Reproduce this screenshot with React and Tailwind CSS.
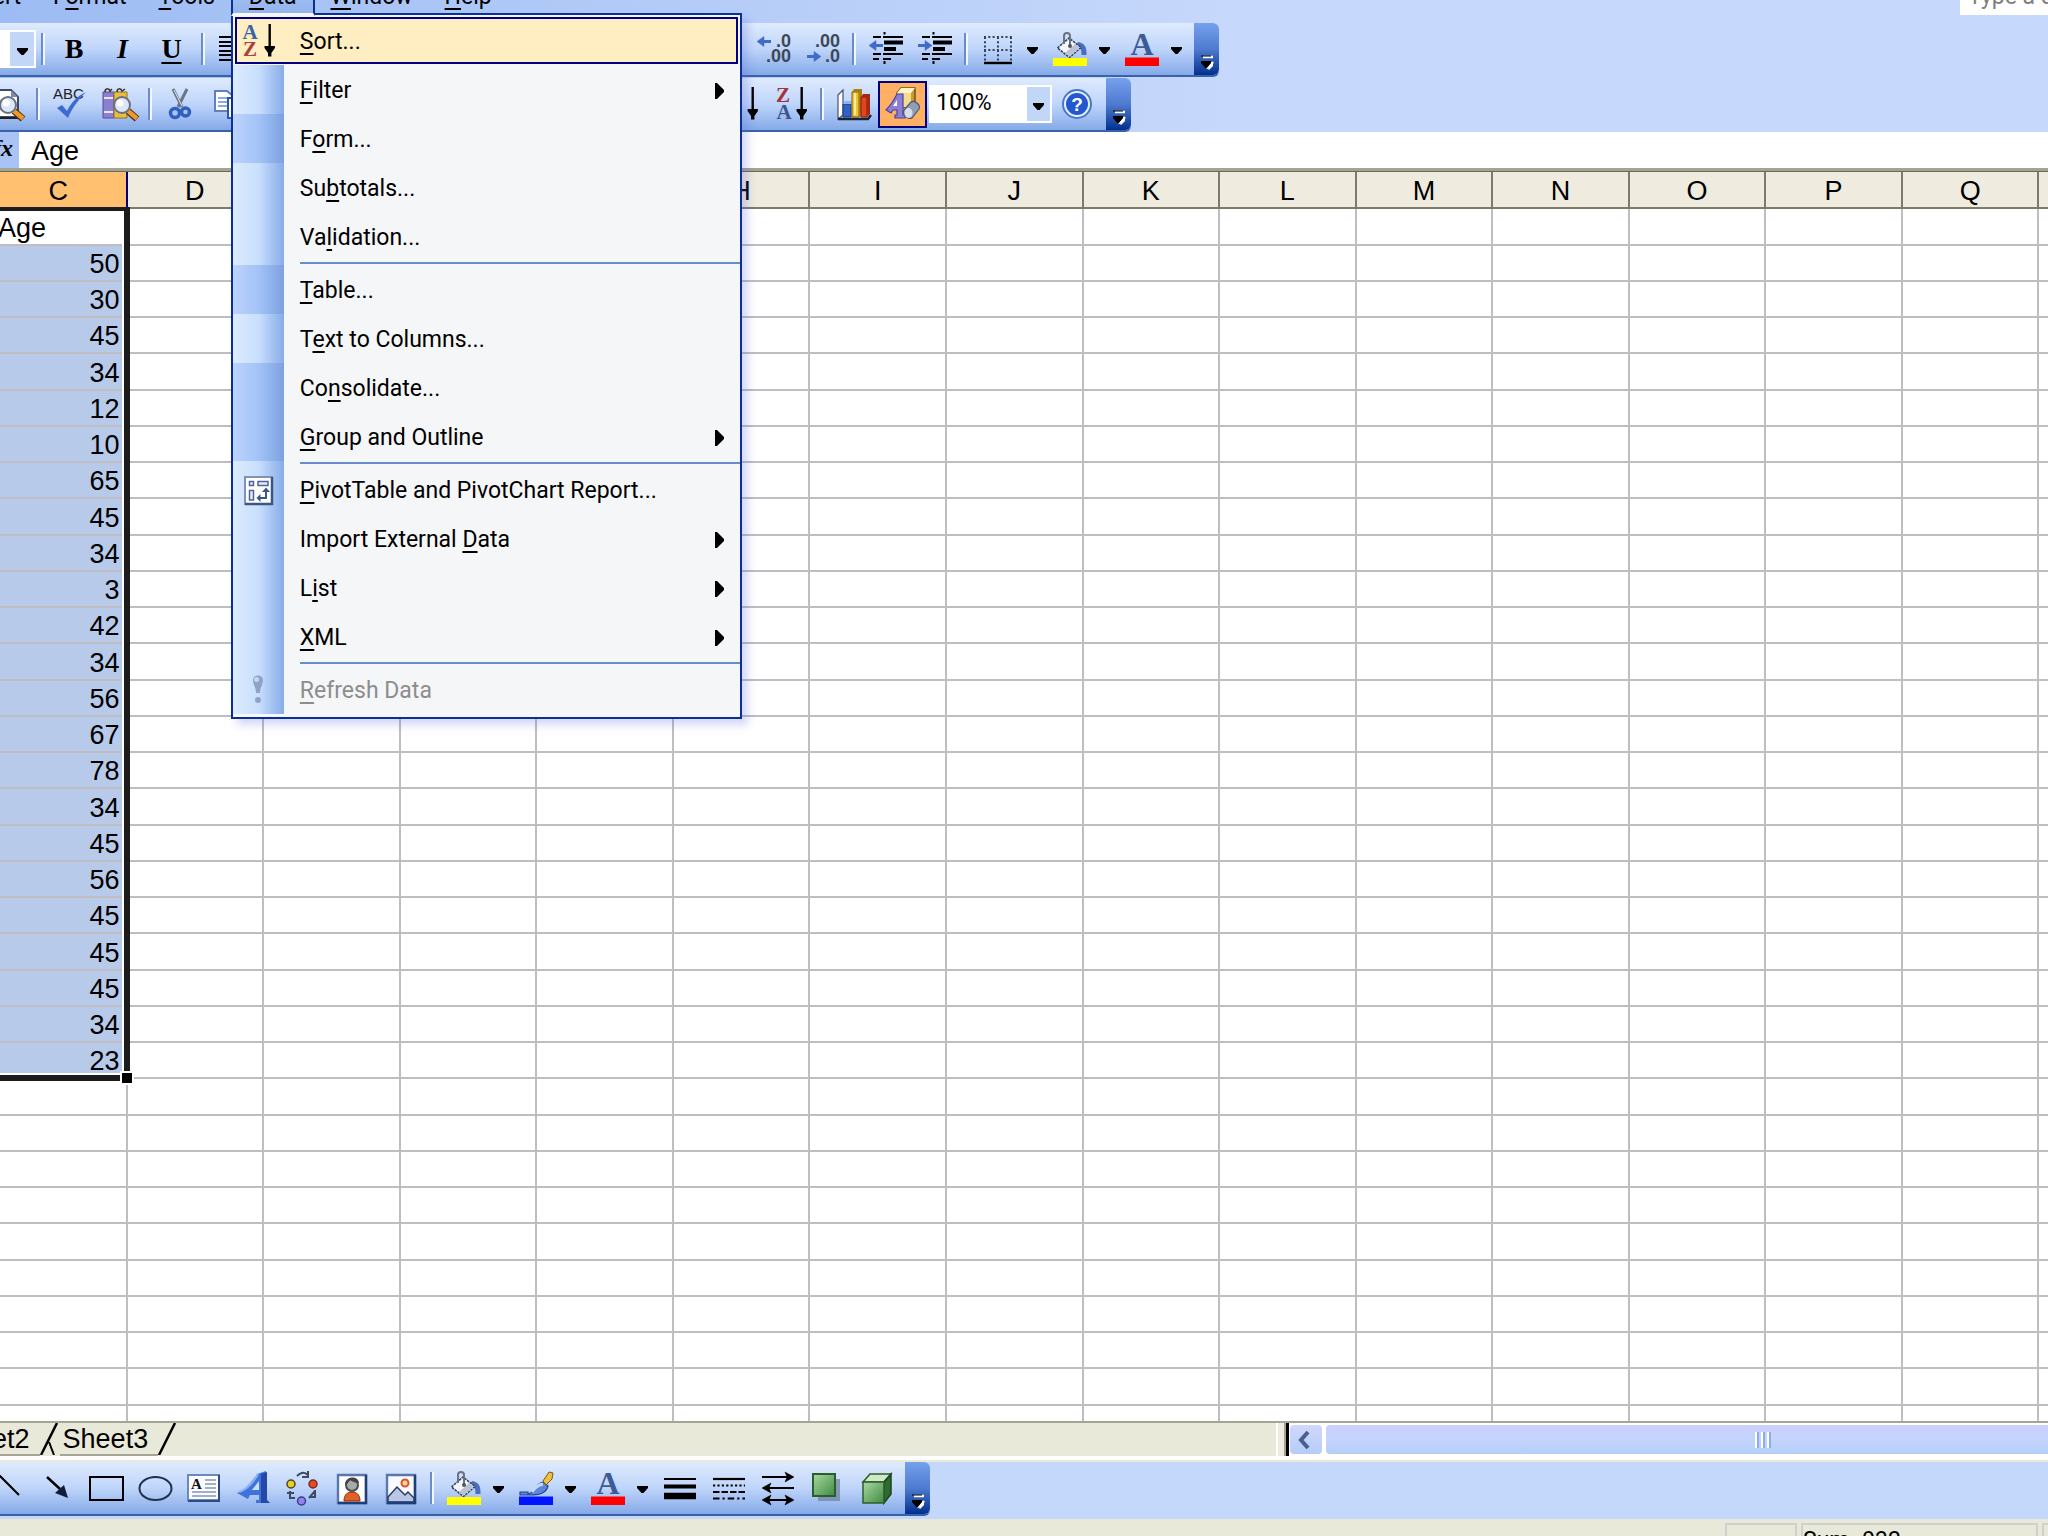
import { useState } from 'react';

const ages = [50, 30, 45, 34, 12, 10, 65, 45, 34, 3, 42, 34, 56, 67, 78, 34, 45, 56, 45, 45, 45, 34, 23];
const columns = ['C', 'D', 'E', 'F', 'G', 'H', 'I', 'J', 'K', 'L', 'M', 'N', 'O', 'P', 'Q', 'R'];
const ROW_COUNT = 36;

const menuBar = ['&Insert', 'F&ormat', '&Tools', '&Data', '&Window', '&Help'];

const dataMenu = [
  { label: '&Sort...', icon: 'sortAsc', active: true },
  { label: '&Filter', submenu: true },
  { label: 'F&orm...', rare: true },
  { label: 'Su&btotals...' },
  { label: 'Va&lidation...' },
  { divider: true },
  { label: '&Table...', rare: true },
  { label: 'T&ext to Columns...' },
  { label: 'Co&nsolidate...', rare: true },
  { label: '&Group and Outline', submenu: true, rare: true },
  { divider: true },
  { label: '&PivotTable and PivotChart Report...', icon: 'pivot' },
  { label: 'Import External &Data', submenu: true },
  { label: 'L&ist', submenu: true },
  { label: '&XML', submenu: true },
  { divider: true },
  { label: '&Refresh Data', icon: 'refresh', disabled: true },
];

// "&" marks the access key, as in Windows resource files
function Accel({ text }) {
  const [before, after] = text.split('&');
  return (
    <span>
      {before}
      <u className="decoration-2 underline-offset-4">{after[0]}</u>
      {after.slice(1)}
    </span>
  );
}

function Icon({ children }) {
  return (
    <svg viewBox="0 0 34 34" className="w-[34px] h-[34px] shrink-0 overflow-visible" aria-hidden="true">
      {children}
    </svg>
  );
}

function Letter({ x, y, size, fill, children, serif = true, anchor = 'start', weight = 'bold' }) {
  return (
    <text
      x={x}
      y={y}
      fontSize={size}
      fill={fill}
      fontWeight={weight}
      textAnchor={anchor}
      fontFamily={serif ? '"Liberation Serif", serif' : '"Liberation Sans", sans-serif'}
    >
      {children}
    </text>
  );
}

function LeftArrow({ x, y }) {
  return (
    <g stroke="#3f6bc9" fill="#3f6bc9">
      <path d={`M${x + 5} ${y}h9`} strokeWidth="3" />
      <path d={`M${x} ${y}l7 -5v10z`} strokeWidth="0.5" />
    </g>
  );
}

function RightArrow({ x, y }) {
  return (
    <g stroke="#3f6bc9" fill="#3f6bc9">
      <path d={`M${x} ${y}h9`} strokeWidth="3" />
      <path d={`M${x + 14} ${y}l-7 -5v10z`} strokeWidth="0.5" />
    </g>
  );
}

function DownArrow() {
  return (
    <g fill="#000">
      <path d="M25.500 0h2.400v24h-2.400z" />
      <path d="M21.500 22h10.400v2l-3.500 5v3.500h-3.400V29l-3.500 -5z" />
    </g>
  );
}

function Bucket({ color }) {
  return (
    <Icon>
      <path d="M25 10c6 1 9 4 8.500 13h-5c0-6-1-8-5-10z" fill="#4a6fc0" />
      <path d="M4.500 16 16 6l12 9.500L16.500 25.500z" fill="#f4f6fb" stroke="#35435f" strokeWidth="1.600" strokeDasharray="2.500 0.900" />
      <path d="M16.500 24.500 27 15.500 22 12 12 21z" fill="#b9c3d6" />
      <path d="M11 12V4c0-4 6-4 6 0v9" fill="none" stroke="#6b7280" strokeWidth="2" />
      <circle cx="17" cy="14" r="2" fill="#4b5563" />
      <path d="M0 26h34v8H0z" fill={color} />
    </Icon>
  );
}

function FontColor() {
  return (
    <Icon>
      <Letter x="17" y="22.500" size="32" fill="#3d5b96" anchor="middle">A</Letter>
      <path d="M0 25.500h34V34H0z" fill="#f00" />
    </Icon>
  );
}

function Lines({ rows }) {
  return (
    <path d={rows.map(([x1, x2, y]) => `M${x1} ${y}H${x2}`).join('')} stroke="#000" strokeWidth="2" />
  );
}

function Magnifier({ x, y }) {
  return (
    <g transform={`translate(${x} ${y})`}>
      <path d="M6 6l9 8" stroke="#4a3520" strokeWidth="7" />
      <path d="M6 6l9 7.500" stroke="#f0982c" strokeWidth="4.500" />
      <circle cx="0" cy="0" r="8" fill="#dbe6f7" stroke="#69717f" strokeWidth="2" />
      <circle cx="-2" cy="-2" r="3.500" fill="#fff" />
    </g>
  );
}

const icons = {
  alignLeft: (
    <Icon>
      <Lines rows={[[1, 33, 5], [1, 24, 10], [1, 33, 14], [1, 24, 19], [1, 33, 23], [1, 24, 28]]} />
    </Icon>
  ),
  incDecimal: (
    <Icon>
      <LeftArrow x={0} y={9.5} />
      <Letter x="34" y="15" size="18" fill="#3c4858" serif={false} anchor="end">.0</Letter>
      <Letter x="34" y="30" size="18" fill="#3c4858" serif={false} anchor="end">.00</Letter>
    </Icon>
  ),
  decDecimal: (
    <Icon>
      <Letter x="34" y="15" size="18" fill="#3c4858" serif={false} anchor="end">.00</Letter>
      <RightArrow x={1} y={24.5} />
      <Letter x="34" y="30" size="18" fill="#3c4858" serif={false} anchor="end">.0</Letter>
    </Icon>
  ),
  outdent: (
    <Icon>
      <Lines rows={[[4, 12, 5], [14, 34, 5], [4, 12, 22], [14, 34, 22], [4, 10, 27], [14, 22, 27]]} />
      <path d="M15 10.500h19M15 17h12" stroke="#000" strokeWidth="4" />
      <path d="M15.500 0v2.500M15.500 29v3" stroke="#000" strokeWidth="2" />
      <LeftArrow x={0} y={13.5} />
    </Icon>
  ),
  indent: (
    <Icon>
      <Lines rows={[[4, 12, 5], [14, 34, 5], [4, 12, 22], [14, 34, 22], [4, 10, 27], [14, 22, 27]]} />
      <path d="M15 10.500h19M15 17h12" stroke="#000" strokeWidth="4" />
      <path d="M15.500 0v2.500M15.500 29v3" stroke="#000" strokeWidth="2" />
      <RightArrow x={0} y={13.5} />
    </Icon>
  ),
  borders: (
    <Icon>
      <path
        d="M3 5h28M3 18h28M4 5v24M17 5v24M30 5v24"
        stroke="#33415c"
        strokeWidth="2"
        strokeDasharray="2 2.300"
      />
      <path d="M3 31h28" stroke="#000" strokeWidth="2.400" />
    </Icon>
  ),
  fill: <Bucket color="#ff0" />,
  fontColor: <FontColor />,
  preview: (
    <Icon>
      <path d="M4 3h17l7 7v20H4z" fill="#fff" stroke="#3f4c66" strokeWidth="2" />
      <path d="M21 3v7h7z" fill="#7b8aa8" />
      <path d="M2 31h28" stroke="#222" strokeWidth="2" />
      <Magnifier x={18} y={18} />
    </Icon>
  ),
  spelling: (
    <Icon>
      <Letter x="0" y="12" size="15" fill="#222" serif={false} weight="normal">ABC</Letter>
      <path d="M4 21l5-3 5 6C18 16 24 9 33 5 26 12 19 21 15 31z" fill="#3f6bd0" />
    </Icon>
  ),
  research: (
    <Icon>
      <path d="M1 5h11v26H1z" fill="#8d7fd0" stroke="#5b4c9c" strokeWidth="1" />
      <path d="M2 11h9M2 25h9" stroke="#e8e4ff" strokeWidth="2" />
      <path d="M12 5h13v26H12z" fill="#e8bd45" stroke="#94701c" strokeWidth="1" />
      <path d="M3 5c0-4 4-4 5-1l2-2M15 5c0-4 4-4 5-1l3-2" fill="none" stroke="#3a3226" strokeWidth="1.500" />
      <Magnifier x={20} y={18} />
    </Icon>
  ),
  cut: (
    <Icon>
      <path d="M8 2l9 18M22 2l-9 18" stroke="#6a7488" strokeWidth="3" />
      <path d="M9 3l8 16" stroke="#dfe6f0" strokeWidth="1" />
      <circle cx="10" cy="26" r="4.500" fill="none" stroke="#2f5fc0" strokeWidth="3.500" />
      <circle cx="20.500" cy="25" r="4" fill="none" stroke="#2f5fc0" strokeWidth="3.500" />
    </Icon>
  ),
  copy: (
    <Icon>
      <path d="M1 4h12l6 5v15H1z" fill="#fff" stroke="#5f7fbf" strokeWidth="2" />
      <path d="M4 11h11M4 15h11M4 19h11" stroke="#6f8fd0" strokeWidth="1.600" />
      <path d="M14 11h12l6 5v15H14z" fill="#fff" stroke="#2f55b0" strokeWidth="2" />
    </Icon>
  ),
  sortAsc: (
    <Icon>
      <Letter x="8" y="15" size="21" fill="#3d62a5" anchor="middle">A</Letter>
      <Letter x="8" y="32" size="21" fill="#a8423c" anchor="middle">Z</Letter>
      <g transform="translate(1 0)"><DownArrow /></g>
    </Icon>
  ),
  sortDesc: (
    <Icon>
      <Letter x="9" y="15" size="21" fill="#a8323c" anchor="middle">Z</Letter>
      <Letter x="10" y="32" size="21" fill="#3d5590" anchor="middle">A</Letter>
      <g transform="translate(1 0)"><DownArrow /></g>
    </Icon>
  ),
  chart: (
    <Icon>
      <path d="M1 8l5-5v25l-5 4z" fill="#fff" stroke="#46536e" strokeWidth="1.200" />
      <path d="M1 32h30l3-4" fill="none" stroke="#1c2433" strokeWidth="2.400" />
      <path d="M6 17h8v13H6z" fill="#2f62c4" stroke="#1c3a80" />
      <path d="M6 17l2-3h8l-2 3z" fill="#8db4f2" />
      <path d="M15 5h7v25h-7z" fill="#f2c230" stroke="#80600c" />
      <path d="M15 5l2-3h8l-3 3zM22 5l3-3v26l-3 2z" fill="#a97f18" />
      <path d="M17 6h2v22h-2z" fill="#fdeb9c" />
      <path d="M24 10h6v20h-6z" fill="#e0451f" stroke="#821c0c" />
      <path d="M24 10l2-3h7l-3 3zM30 10l3-3v20l-3 3z" fill="#a32a12" />
    </Icon>
  ),
  drawing: (
    <Icon>
      <path d="M11 6l4-5h14v14l-4 5H11z" fill="#c79a34" stroke="#6f5416" strokeWidth="1.500" />
      <path d="M11 6h14v14H11z" fill="#f3dc8e" />
      <path d="M11 6l4-5h14l-4 5z" fill="#fdf3c8" />
      <path d="M0 23c5-5 8-10 11-16h6v21h2v3H9v-3h2v-5H7l-2 3z" fill="#8c7fd8" stroke="#4f4399" strokeWidth="1.200" />
      <path d="M7 19l4-6v6z" fill="#fff" />
      <path d="M18 23l7-8c4-2 10 3 8 7l-7 9c-5 2-10-4-8-8z" fill="#8f9db5" stroke="#4c586d" strokeWidth="1.200" />
      <ellipse cx="22.500" cy="26" rx="4" ry="5" fill="#d5deea" />
    </Icon>
  ),
  help: (
    <Icon>
      <circle cx="17" cy="17" r="14" fill="#e6f0ff" stroke="#4878c8" strokeWidth="2" />
      <circle cx="17" cy="17" r="11" fill="#2458cf" />
      <Letter x="17" y="24" size="19" fill="#fff" serif={false} anchor="middle">?</Letter>
    </Icon>
  ),
  line: (
    <Icon>
      <path d="M7 4l20 20" stroke="#000" strokeWidth="2" />
    </Icon>
  ),
  arrow: (
    <Icon>
      <path d="M6 6l13 12" stroke="#000" strokeWidth="2.400" />
      <path d="M27 27l-4-13-9 8z" fill="#0f1c3a" />
    </Icon>
  ),
  rect: (
    <Icon>
      <path d="M0 6h33v23H0z" fill="none" stroke="#000" strokeWidth="2" />
    </Icon>
  ),
  ellipse: (
    <Icon>
      <ellipse cx="16.500" cy="17.500" rx="16" ry="11.500" fill="none" stroke="#22304c" strokeWidth="2" />
    </Icon>
  ),
  textBox: (
    <Icon>
      <path d="M0 4h31v25H0z" fill="#fbfcff" stroke="#6d88bd" strokeWidth="2" />
      <path d="M31 4v26H0" fill="none" stroke="#2f4a80" strokeWidth="2" />
      <Letter x="3" y="18" size="15" fill="#111">A</Letter>
      <path d="M17 9h11M17 13h11M17 17h11M4 21h24M4 25h24" stroke="#8497b8" strokeWidth="1.500" />
    </Icon>
  ),
  wordArt: (
    <Icon>
      <path d="M0 22l6-3C12 14 17 8 20 3l9-3v29l4 3H19v-3h3v-5h-9l-2 4z" fill="#3f73dd" />
      <path d="M24 3l6-2v28l3 3h-9z" fill="#2447a8" />
      <path d="M15 19l7-9v9z" fill="#cfe0ff" />
      <path d="M2 21c8-3 14-9 19-18" fill="none" stroke="#8fb5f7" strokeWidth="2" />
    </Icon>
  ),
  diagram: (
    <Icon>
      <path d="M11 5c4-4 8-4 11-1M22 0v6h-6M4 20v7h5M1 22h7M29 19v7h-6M29 20l-6 7" fill="none" stroke="#3d4a66" strokeWidth="2" />
      <circle cx="5" cy="13" r="4" fill="#e8cc2a" stroke="#4c4620" strokeWidth="1.500" />
      <circle cx="27" cy="13" r="4" fill="#e8492a" stroke="#7c2a1a" strokeWidth="1.500" />
      <circle cx="15.500" cy="30" r="4" fill="#8e86ee" stroke="#3f3a8c" strokeWidth="1.500" />
    </Icon>
  ),
  clipArt: (
    <Icon>
      <path d="M3 4h28v28H3z" fill="#fff" stroke="#5a77ad" strokeWidth="2.400" />
      <path d="M31 4v28H3" fill="none" stroke="#1f3d77" strokeWidth="2.400" />
      <path d="M9 30c0-7 4-9 8-9s8 2 8 9z" fill="#e0622a" stroke="#8a2f0c" />
      <circle cx="17" cy="14" r="6" fill="#a9a9a9" stroke="#4c4c4c" strokeWidth="2" />
      <path d="M10 14c0-9 13-10 14-2-4 0-7-2-9-3-1 2-3 4-5 5z" fill="#444" />
    </Icon>
  ),
  picture: (
    <Icon>
      <path d="M3 4h28v28H3z" fill="#f8faff" stroke="#5a77ad" strokeWidth="2.400" />
      <path d="M4 26l9-10 8 8 3-3 6 6v4H4z" fill="#b9c6e6" stroke="#2b3a5c" strokeWidth="1.500" />
      <path d="M31 4v28H3" fill="none" stroke="#1f3d77" strokeWidth="2.400" />
      <circle cx="21" cy="12" r="3.500" fill="#ffd7a0" stroke="#dd5522" strokeWidth="2" />
    </Icon>
  ),
  lineColor: (
    <Icon>
      <path d="M1 24v-3h8v2c6 0 6-10 15-12l5 4c-2 8-10 9-18 9z" fill="#5b86dc" stroke="#27458c" strokeWidth="1.200" />
      <path d="M13 21c3-5 6-7 11-8" stroke="#c5d8fa" strokeWidth="3" fill="none" />
      <path d="M24 10l6-9 4 1-1 6-6 6z" fill="#f0bf3e" stroke="#7c5a14" />
      <path d="M0 25.500h34V34H0z" fill="#0015ff" />
    </Icon>
  ),
  lineStyle: (
    <Icon>
      <path d="M1 8h32" stroke="#000" strokeWidth="2" />
      <path d="M1 15.500h32" stroke="#000" strokeWidth="4" />
      <path d="M1 25h32" stroke="#000" strokeWidth="6.500" />
    </Icon>
  ),
  dashStyle: (
    <Icon>
      <g stroke="#000" strokeWidth="2.200">
        <path d="M1 8h32" />
        <path d="M1 14.500h32" strokeDasharray="2.200 2.200" />
        <path d="M1 21h32" strokeDasharray="6.500 2" />
        <path d="M1 27.500h32" strokeDasharray="6.500 3 2.200 3" />
      </g>
    </Icon>
  ),
  arrowStyle: (
    <Icon>
      <g stroke="#000" strokeWidth="2.200" fill="#000">
        <path d="M1 6h26M7 17h26M7 29h20" />
        <path d="M33 6l-9-5 2 5-2 5zM1 17l9-5-2 5 2 5zM1 29l9-5-2 5 2 5zM33 29l-9-5 2 5-2 5z" strokeWidth="0.500" />
      </g>
    </Icon>
  ),
  shadow: (
    <Icon>
      <path d="M8 8h22v22H8z" fill="#6c7f9c" opacity="0.700" />
      <path d="M3 3h22v22H3z" fill="url(#greenFace)" stroke="#2b5e2c" strokeWidth="2" />
    </Icon>
  ),
  cube: (
    <Icon>
      <path d="M4 11l7-8h21l-7 8z" fill="#cfe8c6" stroke="#2b5e2c" strokeWidth="1.500" />
      <path d="M25 11l7-8v20l-7 9z" fill="#2f6a31" stroke="#1c4420" strokeWidth="1.500" />
      <path d="M4 11h21v21H4z" fill="url(#greenFace)" stroke="#2b5e2c" strokeWidth="1.500" />
    </Icon>
  ),
  pivot: (
    <Icon>
      <path d="M4 4h27v27H4z" fill="#fff" stroke="#7f93b8" strokeWidth="2" />
      <path d="M31 4v27H4" fill="none" stroke="#3c5684" strokeWidth="2.500" />
      <path d="M8.500 8.500h4v4h-4zM17 8.500h10v4H17zM8.500 17.500h4v9.500h-4z" fill="#e6edf9" stroke="#4c6596" strokeWidth="1.500" />
      <path d="M18 25h7v-7" fill="none" stroke="#3c5684" strokeWidth="2" />
      <path d="M15.500 25l4-4v8zM25 14.500l4 4.500h-8z" fill="#3c5684" />
    </Icon>
  ),
  refresh: (
    <Icon>
      <path d="M12 7c0-6 10-6 10 0 0 5-3 7-3 13h-4c0-6-3-8-3-13z" fill="#8fa3c8" />
      <circle cx="15.500" cy="6.500" r="2.500" fill="#c9d7ee" />
      <circle cx="17" cy="27" r="3" fill="#8fa3c8" />
    </Icon>
  ),
};

function Caret() {
  return (
    <svg viewBox="0 0 11 7" className="w-[11px] h-[7px]" aria-hidden="true">
      <path d="M0 0h11v2L6.500 7h-2L0 2z" fill="#000" />
    </svg>
  );
}

function Tool({ name, label, toggled }) {
  return (
    <button
      aria-label={label}
      aria-pressed={toggled}
      className={`w-[49px] h-[47px] shrink-0 flex items-center justify-center ${
        toggled ? 'bg-[#ffb063] border-2 border-[#000080]' : ''
      }`}
    >
      {icons[name]}
    </button>
  );
}

function Drop({ label }) {
  return (
    <button aria-label={label} className="w-[23px] h-[47px] shrink-0 flex items-center justify-center pr-0.5 pt-0.5">
      <Caret />
    </button>
  );
}

function Divider() {
  return (
    <div className="w-3.5 shrink-0 flex justify-center">
      <div className="w-1 h-8 border-l-2 border-r-2 border-l-[#6a8ccb] border-r-[#f1f7ff]" />
    </div>
  );
}

function EndCap() {
  return (
    <button
      aria-label="Toolbar options"
      className="ml-[5px] w-[25px] shrink-0 self-stretch flex flex-col items-center justify-end pb-1 rounded-r-md bg-linear-to-b from-[#76a1ee] via-[#4f7bd0] to-[#00308f]"
    >
      <svg viewBox="0 0 14 16" className="w-3.5 h-4" aria-hidden="true">
        <path d="M3 2h10M6 13l3-1 4-5" stroke="#fff" strokeWidth="2.500" fill="none" />
        <path d="M1 1h10" stroke="#000" strokeWidth="1" />
        <path d="M1 6h10v2l-5 6-5-6z" fill="#000" />
        <path d="M8 14l5-6v3l-4 4z" fill="#fff" />
      </svg>
    </button>
  );
}

function Toolbar({ children, label }) {
  return (
    <div
      role="toolbar"
      aria-label={label}
      className="w-fit h-[54px] flex items-center rounded-r-md border-b-2 border-[#3b61a8] bg-linear-to-b from-[#dfebfe] via-[#bfd5fa] to-[#85a9e8]"
    >
      {children}
      <EndCap />
    </div>
  );
}

function MenuGutter({ rare, children }) {
  return (
    <span
      className={`w-[51px] shrink-0 self-stretch flex items-center justify-center bg-linear-to-r ${
        rare ? 'from-[#bdd3fb] via-[#a3c3f8] to-[#7da1e0]' : 'from-[#dcebff] via-[#c9dffc] to-[#88ace8]'
      }`}
    >
      {children}
    </span>
  );
}

function MenuItem({ item }) {
  if (item.divider) {
    return (
      <li role="separator" className="flex h-1">
        <MenuGutter />
        <span className="ml-4 mt-px h-0.5 flex-1 bg-[#6a8ccb]" />
      </li>
    );
  }
  if (item.active) {
    return (
      <li className="flex h-[49px] p-px">
        <button className="flex flex-1 items-center mx-px border-2 border-[#000080] bg-[#ffeec2] text-left">
          <span className="w-11 flex justify-center">{icons[item.icon]}</span>
          <span className="pl-[19px] pt-0.5"><Accel text={item.label} /></span>
        </button>
      </li>
    );
  }
  return (
    <li>
      <button disabled={item.disabled} className="flex w-full h-[49px] items-center text-left disabled:text-[#8d8d8d]">
        <MenuGutter rare={item.rare}>{item.icon && icons[item.icon]}</MenuGutter>
        <span className="pl-4 pt-[3px] flex-1"><Accel text={item.label} /></span>
        {item.submenu && (
          <svg viewBox="0 0 9 16" className="w-[9px] h-4 mr-4 mt-0.5" aria-hidden="true">
            <path d="M0 0h2l7 7v2l-7 7H0z" fill="#000" />
          </svg>
        )}
      </button>
    </li>
  );
}

function MenuBar() {
  return (
    <header className="relative z-30 -mt-5 h-[43px] shrink-0 flex items-start">
      <ul className="-ml-[54px] flex leading-6">
        {menuBar.map((label) => (
          <li key={label} className="relative">
            {label === '&Data' ? (
              <>
                <button className="relative z-20 flex h-9 px-4 pt-[5px] border-x-2 border-x-[#0a2f96] border-b-[3px] border-b-[#f6f6f6] bg-linear-to-b from-[#a9c8f7] to-[#93b5ec]">
                  <Accel text={label} />
                </button>
                <ul className="absolute left-0 top-[33px] z-10 w-[511px] border-2 border-[#0a2f96] bg-[#f5f6f8] pt-px pb-[3px] shadow-[6px_6px_8px_rgba(90,100,220,0.250)]">
                  {dataMenu.map((item, i) => <MenuItem key={i} item={item} />)}
                </ul>
              </>
            ) : (
              <button className="flex h-9 px-4 pt-[5px]"><Accel text={label} /></button>
            )}
          </li>
        ))}
      </ul>
      <input
        aria-label="Type a question for help"
        placeholder="Type a question for help"
        className="ml-auto w-[88px] h-[35px] bg-white pl-2 pb-0.5 placeholder:text-[#808080] outline-none"
      />
    </header>
  );
}

function FormattingBar() {
  return (
    <Toolbar label="Formatting">
      <div className="w-9 h-[38px] shrink-0 bg-white flex justify-end p-0.5">
        <button aria-label="Font size" className="w-6 bg-[#c2d6f8] flex items-center justify-center pt-1"><Caret /></button>
      </div>
      <Divider />
      <button className="w-12 font-[Liberation_Serif,serif] text-[28px] font-black">B</button>
      <button className="w-[49px] font-[Liberation_Serif,serif] text-[28px] font-bold italic">I</button>
      <button className="w-[49px] font-[Liberation_Serif,serif] text-[28px] font-bold underline underline-offset-4">U</button>
      <Divider />
      <Tool name="alignLeft" label="Align left" />
      <div className="w-[490px] shrink-0" />
      <Tool name="incDecimal" label="Increase decimal" />
      <Tool name="decDecimal" label="Decrease decimal" />
      <Divider />
      <Tool name="outdent" label="Decrease indent" />
      <Tool name="indent" label="Increase indent" />
      <Divider />
      <Tool name="borders" label="Borders" />
      <Drop label="Border styles" />
      <Tool name="fill" label="Fill color" />
      <Drop label="Fill colors" />
      <Tool name="fontColor" label="Font color" />
      <Drop label="Font colors" />
    </Toolbar>
  );
}

function StandardBar() {
  const [zoom, setZoom] = useState('100%');
  return (
    <Toolbar label="Standard">
      <div className="-ml-[18px] flex"><Tool name="preview" label="Print preview" /></div>
      <Divider />
      <Tool name="spelling" label="Spelling" />
      <Tool name="research" label="Research" />
      <Divider />
      <Tool name="cut" label="Cut" />
      <Tool name="copy" label="Copy" />
      <div className="w-[462px] shrink-0" />
      <Tool name="sortAsc" label="Sort ascending" />
      <Tool name="sortDesc" label="Sort descending" />
      <Divider />
      <Tool name="chart" label="Chart wizard" />
      <Tool name="drawing" label="Drawing" toggled />
      <div className="ml-0.5 w-[123px] h-[38px] shrink-0 bg-white flex p-0.5">
        <input
          aria-label="Zoom"
          value={zoom}
          onChange={(e) => setZoom(e.target.value)}
          className="w-24 pl-[5px] pb-px outline-none"
        />
        <button aria-label="Zoom levels" className="w-6 bg-[#c2d6f8] flex items-center justify-center pt-1"><Caret /></button>
      </div>
      <Tool name="help" label="Help" />
    </Toolbar>
  );
}

function DrawingBar() {
  return (
    <Toolbar label="Drawing">
      <div className="-ml-4 flex"><Tool name="line" label="Line" /></div>
      <Tool name="arrow" label="Arrow" />
      <Tool name="rect" label="Rectangle" />
      <Tool name="ellipse" label="Oval" />
      <Tool name="textBox" label="Text box" />
      <Tool name="wordArt" label="Insert WordArt" />
      <Tool name="diagram" label="Insert diagram" />
      <Tool name="clipArt" label="Insert clip art" />
      <Tool name="picture" label="Insert picture" />
      <Divider />
      <Tool name="fill" label="Shape fill" />
      <Drop label="Shape fill colors" />
      <Tool name="lineColor" label="Line color" />
      <Drop label="Line colors" />
      <Tool name="fontColor" label="Text color" />
      <Drop label="Text colors" />
      <Tool name="lineStyle" label="Line style" />
      <Tool name="dashStyle" label="Dash style" />
      <Tool name="arrowStyle" label="Arrow style" />
      <Tool name="shadow" label="Shadow style" />
      <Tool name="cube" label="3-D style" />
    </Toolbar>
  );
}

function Sheet() {
  const lastRow = ages.length;
  return (
    <main className="flex-1 min-h-0 overflow-hidden bg-white border-b-2 border-[#a5a495] text-[27px] leading-8">
      <div className="relative -ml-[9px] w-[2185px]">
        <table className="w-full table-fixed border-separate border-spacing-0">
          <thead>
            <tr className="h-[37px]">
              {columns.map((col) => (
                <th
                  key={col}
                  scope="col"
                  className={`p-0 pt-0.5 font-normal border-r-2 border-b-2 border-b-[#7d7b69] ${
                    col === 'C' ? 'bg-[#ffc06f] border-r-[#000080]' : 'bg-[#efebde] border-r-[#7d7b69]'
                  }`}
                >
                  {col}
                </th>
              ))}
            </tr>
          </thead>
          <tbody>
            {Array.from({ length: ROW_COUNT }, (_, row) => (
              <tr key={row} className={row % 4 === 0 ? 'h-[37px]' : 'h-9'}>
                {columns.map((col) => {
                  if (col !== 'C') return <td key={col} className="p-0 border-r-2 border-b-2 border-[#bfbdc1]" />;
                  if (row === 0) return <td key={col} className="p-0 pt-0.5 pl-[7px] border-r-2 border-b-2 border-[#bfbdc1]">Age</td>;
                  const filled = row <= lastRow;
                  return (
                    <td
                      key={col}
                      className={`p-0 pt-0.5 pr-1.5 text-right border-r-2 border-b-2 border-[#bfbdc1] ${filled ? 'bg-[#b8cae9]' : ''}`}
                    >
                      {filled ? ages[row - 1] : ''}
                    </td>
                  );
                })}
              </tr>
            ))}
          </tbody>
        </table>
        {/* selection frame around C1:C24 */}
        <div className="absolute left-0 top-[35px] w-[139px] h-[874px] border-t-4 border-r-[6px] border-b-[6px] border-[#1c1c1c] pointer-events-none">
          <div className="h-full border-r-2 border-b-2 border-white" />
          <div className="absolute -right-2.5 -bottom-2.5 size-3.5 border-2 border-white bg-black" />
        </div>
      </div>
    </main>
  );
}

function TabSlash({ joined }) {
  return (
    <svg viewBox="0 0 20 32" className="w-5 h-8 shrink-0" aria-hidden="true">
      <path d="M1 32L17 0" stroke="#000" strokeWidth="2.500" />
      {joined && <path d="M9 19l5 13" stroke="#000" strokeWidth="2" />}
    </svg>
  );
}

function SheetTabs() {
  return (
    <div className="h-[33px] shrink-0 flex text-[27px] leading-8 bg-[#e9e9da]">
      <nav className="flex-1 flex overflow-hidden">
        <a href="#sheet2" className="-ml-14 pr-2.5 border-b-2 border-[#a5a495]">Sheet2</a>
        <TabSlash joined />
        <a href="#sheet3" className="pl-[3px] pr-2.5 border-b-2 border-[#a5a495]">Sheet3</a>
        <TabSlash />
      </nav>
      <div className="w-2.5 shrink-0 border-l-2 border-l-white border-r-2 border-r-[#a5a495] bg-[#efebde]" />
      <div className="w-[762px] shrink-0 flex overflow-hidden border-l-[3px] border-black bg-white py-0.5">
        <button aria-label="Scroll left" className="ml-px mr-1 w-8 shrink-0 rounded-sm bg-linear-to-b from-[#d0d8fe] to-[#b5cdf8] flex items-center justify-center pr-1">
          <svg viewBox="0 0 12 20" className="w-3 h-5" aria-hidden="true">
            <path d="M10 2L3 10l7 8" fill="none" stroke="#4a5f8f" strokeWidth="4" />
          </svg>
        </button>
        <div className="w-[873px] shrink-0 rounded-sm bg-linear-to-b from-[#ccd0fd] via-[#c3d4fe] to-[#b5cff8] flex items-center justify-center gap-0.5">
          <span className="w-1 h-4 border-l-2 border-white bg-[#8cabf0]" />
          <span className="w-1 h-4 border-l-2 border-white bg-[#8cabf0]" />
          <span className="w-1 h-4 border-l-2 border-white bg-[#8cabf0]" />
        </div>
      </div>
    </div>
  );
}

export default function App() {
  return (
    <div className="h-screen flex flex-col overflow-hidden bg-[#e9e9da] font-[Roboto,sans-serif] text-[23px] text-black">
      <svg className="absolute size-0" aria-hidden="true">
        <linearGradient id="greenFace" x1="0" y1="0" x2="1" y2="1">
          <stop offset="0" stopColor="#a9d9a0" />
          <stop offset="1" stopColor="#3f8a42" />
        </linearGradient>
      </svg>
      <div className="shrink-0 bg-linear-to-r from-[#9dbcf3] to-[#c6d8fb] to-60%">
        <MenuBar />
        <FormattingBar />
        <div className="h-px" />
        <StandardBar />
      </div>

      <div className="h-9 shrink-0 flex bg-white text-[27px] leading-9">
        <button aria-label="Insert function" className="w-[19px] bg-[#a8c4f6] flex justify-end pr-1.5 font-[Liberation_Serif,serif] text-2xl font-bold italic">
          fx
        </button>
        <label htmlFor="formula" className="sr-only">Formula</label>
        <input id="formula" defaultValue="Age" className="flex-1 pl-3 pt-0.5 outline-none font-[Liberation_Sans,sans-serif]" />
      </div>
      <div className="h-1 shrink-0 bg-[#a5a391] border-b border-[#6b6958]" />

      <div className="flex-1 min-h-0 flex flex-col font-[Liberation_Sans,sans-serif]">
        <Sheet />
        <SheetTabs />
      </div>
      <div className="h-1 shrink-0 bg-white" />
      <div className="h-0.5 shrink-0" />

      <div className="shrink-0 bg-[#c3d8fa] pb-[3px]">
        <DrawingBar />
      </div>

      <footer className="h-[17px] shrink-0 flex justify-end gap-1 pt-1 overflow-hidden">
        <div className="w-[72px] h-8 border-2 border-[#d0d0cd]" />
        <div className="w-[237px] h-8 border-2 border-[#d0d0cd] pt-1 leading-6">Sum=932</div>
        <div className="w-1.5 h-8 border-2 border-r-0 border-[#d0d0cd]" />
      </footer>
    </div>
  );
}
